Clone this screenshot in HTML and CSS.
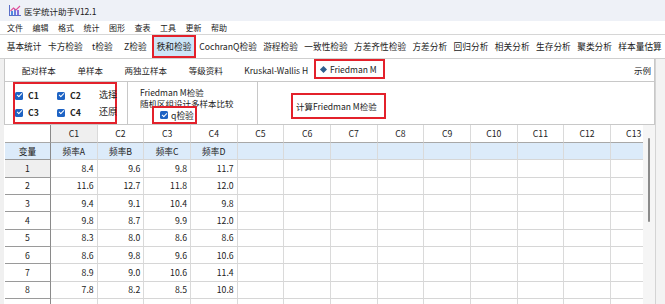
FILE: index.html
```html
<!DOCTYPE html>
<html lang="zh">
<head>
<meta charset="UTF-8">
<meta name="viewport" content="width=device-width, initial-scale=1.0">
<title>医学统计助手V12.1</title>
<link rel="stylesheet" href="styles.css">
</head>
<body>

<div class="app">
  <!-- Title bar -->
  <div class="titlebar">
    <svg class="logo" width="12" height="11" viewBox="0 0 12 11">
      <rect x="0" y="0" width="1" height="11" fill="#5a6fc8"/>
      <rect x="0" y="10" width="12" height="1" fill="#5a6fc8"/>
      <rect x="2" y="6" width="2" height="4" fill="#4f8be0"/>
      <rect x="5" y="4" width="2" height="6" fill="#6a7fe0"/>
      <rect x="8" y="5" width="2" height="5" fill="#8a6fd8"/>
      <polyline points="1.5,6 4.5,3 7,5 11,1" fill="none" stroke="#e0509a" stroke-width="1.1"/>
    </svg>
    <span class="title">医学统计助手V12.1</span>
  </div>

  <!-- Menu -->
  <div class="menubar">
    <span>文件</span><span>编辑</span><span>格式</span><span>统计</span><span>图形</span>
    <span>查表</span><span>工具</span><span>更新</span><span>帮助</span>
  </div>

  <!-- Main toolbar tabs -->
  <div class="toolbar">
    <span class="tool">基本统计</span>
    <span class="tool">卡方检验</span>
    <span class="tool">t检验</span>
    <span class="tool">Z检验</span>
    <span class="tool active">秩和检验</span>
    <span class="tool">CochranQ检验</span>
    <span class="tool">游程检验</span>
    <span class="tool">一致性检验</span>
    <span class="tool">方差齐性检验</span>
    <span class="tool">方差分析</span>
    <span class="tool">回归分析</span>
    <span class="tool">相关分析</span>
    <span class="tool">生存分析</span>
    <span class="tool">聚类分析</span>
    <span class="tool">样本量估算</span>
  </div>

  <div class="workspace">
    <div class="edge-left"></div>

    <div class="center">
      <!-- Test panel -->
      <div class="panel">
        <div class="subtabs">
          <span class="subtab">配对样本</span>
          <span class="subtab">单样本</span>
          <span class="subtab">两独立样本</span>
          <span class="subtab">等级资料</span>
          <span class="subtab">Kruskal-Wallis H</span>
          <span class="subtab selected"><i class="diamond"></i>Friedman M</span>
          <span class="spacer"></span>
          <span class="subtab example">示例</span>
        </div>

        <div class="options">
          <div class="group cols">
            <div class="col-grid">
              <label class="check"><i class="box"></i>C1</label>
              <label class="check"><i class="box"></i>C2</label>
              <span class="link">选择</span>
              <label class="check"><i class="box"></i>C3</label>
              <label class="check"><i class="box"></i>C4</label>
              <span class="link">还原</span>
            </div>
          </div>

          <div class="group desc">
            <div class="line">Friedman M检验</div>
            <div class="line">随机区组设计多样本比较</div>
            <label class="qcheck"><i class="box"></i>q检验</label>
          </div>

          <div class="group action">
            <button type="button" class="run">计算Friedman M检验</button>
          </div>
        </div>
      </div>

      <!-- Data sheet -->
      <div class="sheet">
        <div class="grid" id="grid"></div>
        <div class="vscroll"><div class="thumb"></div></div>
      </div>
    </div>

    <div class="edge-right"></div>
  </div>
</div>

<script>
  // Build the spreadsheet
  var names = ["频率A", "频率B", "频率C", "频率D"];
  var data = [
    [8.4, 9.6, 9.8, 11.7],
    [11.6, 12.7, 11.8, 12.0],
    [9.4, 9.1, 10.4, 9.8],
    [9.8, 8.7, 9.9, 12.0],
    [8.3, 8.0, 8.6, 8.6],
    [8.6, 9.8, 9.6, 10.6],
    [8.9, 9.0, 10.6, 11.4],
    [7.8, 8.2, 8.5, 10.8]
  ];
  var cols = 13;
  var grid = document.getElementById("grid");

  function cell(text, cls) {
    var d = document.createElement("div");
    d.className = "cell " + (cls || "");
    d.textContent = text;
    grid.appendChild(d);
  }

  // Column header row
  cell("", "corner");
  for (var c = 1; c <= cols; c++) {
    cell("C" + c, "colhead" + (c == 1 ? " current" : ""));
  }

  // Variable names row
  cell("变量", "rowhead varhead");
  for (var c = 0; c < cols; c++) {
    cell(names[c] || "", "varname");
  }

  // Data rows
  for (var r = 0; r < 9; r++) {
    cell(r < 8 ? r + 1 : "", "rowhead" + (r == 0 ? " current" : ""));
    for (var c = 0; c < cols; c++) {
      var v = r < 8 ? data[r][c] : undefined;
      cell(v === undefined ? "" : v.toFixed(1), "num");
    }
  }
</script>

</body>
</html>
```

FILE: styles.css
```css
* {
  box-sizing: border-box;
}
body {
  margin: 0;
  font-family: "Noto Sans CJK SC", "Noto Sans", sans-serif;
  color: #222;
  background: #fff;
}
.app {
  width: 665px;
  height: 304px;
  overflow: hidden;
  display: flex;
  flex-direction: column;
}

/* title bar */
.titlebar {
  height: 21px;
  background: #eef1f7;
  display: flex;
  align-items: center;
  padding-left: 9px;
}
.logo {
  margin-right: 3px;
}
.title {
  font-size: 8.5px;
  color: #1a1a1a;
}

/* menu */
.menubar {
  height: 14px;
  display: flex;
  align-items: center;
  padding-left: 7px;
  font-size: 8px;
  border-bottom: 1px solid #d6d6d6;
}
.menubar span {
  margin-right: 9.5px;
}

/* toolbar tabs */
.toolbar {
  height: 24px;
  display: flex;
  align-items: stretch;
  padding-left: 3.5px;
  font-size: 8.7px;
  white-space: nowrap;
  border-bottom: 1px solid #cfcfcf;
}
.tool {
  display: flex;
  align-items: center;
  justify-content: center;
  padding: 0 3.5px;
  min-width: 33px;
}
.tool.active {
  background: #cde5f7;
  border: 2px solid #e3212b;
  padding: 0 3px;
}

/* workspace */
.workspace {
  flex: 1;
  display: flex;
  min-height: 0;
}
.edge-left {
  width: 4px;
  background: #f0f0f0;
}
.center {
  width: 651px;
  display: flex;
  flex-direction: column;
}
.edge-right {
  flex: 1;
  background: #f3f3f3;
  border-left: 1px solid #d4d4d4;
}

/* panel */
.panel {
  height: 66px;
  border-left: 1px solid #c8c8c8;
  border-right: 1px solid #c8c8c8;
  border-bottom: 1px solid #c8c8c8;
}
.subtabs {
  height: 23px;
  display: flex;
  align-items: stretch;
  padding-left: 6px;
  font-size: 8.5px;
  white-space: nowrap;
  border-bottom: 1px solid #c8c8c8;
}
.subtab {
  display: flex;
  align-items: center;
  padding: 0 10.8px;
}
.subtab.selected {
  border: 2px solid #e3212b;
  margin: 0 0 2px -5px;
  padding: 0 6px 0 5px;
}
.diamond {
  width: 5px;
  height: 5px;
  background: #2f5f8f;
  transform: rotate(45deg);
  margin-right: 4px;
}
.spacer {
  flex: 1;
}
.subtab.example {
  padding: 0 3px 0 0;
}

.options {
  height: 42px;
  display: flex;
}
.group {
  height: 100%;
}
.cols {
  width: 104px;
  margin-left: 8px;
  margin-right: 10px;
  border: 2px solid #e3212b;
}
.col-grid {
  display: grid;
  grid-template-columns: 42px 42px auto;
  grid-auto-rows: 17px;
  padding-top: 3px;
  font-size: 8.7px;
  white-space: nowrap;
}
.check {
  display: flex;
  align-items: center;
  font-weight: bold;
}
.box {
  display: inline-block;
  width: 8px;
  height: 8px;
  margin-right: 5px;
  border-radius: 1.5px;
  background: #1e63c4;
  position: relative;
}
.box::after {
  content: "";
  position: absolute;
  left: 2.5px;
  top: 0.8px;
  width: 2px;
  height: 4px;
  border: solid #fff;
  border-width: 0 1px 1px 0;
  transform: rotate(45deg);
}
.link {
  display: flex;
  align-items: center;
  font-size: 9px;
  margin-top: -2px;
}

.desc {
  width: 130px;
  border-left: 1px solid #c8c8c8;
  padding: 5px 0 0 12px;
  font-size: 8.5px;
  line-height: 11px;
  position: relative;
  white-space: nowrap;
}
.qcheck {
  position: absolute;
  left: 24px;
  top: 24px;
  width: 45px;
  height: 18px;
  background: #fff;
  border: 2px solid #e3212b;
  display: flex;
  align-items: center;
  padding-left: 6px;
  font-size: 8.7px;
}
.qcheck .box {
  margin-right: 3px;
}

.action {
  border-left: 1px solid #c8c8c8;
  padding: 9px 0 0 33px;
}
.run {
  width: 95px;
  height: 26px;
  border: 2px solid #e3212b;
  background: #fff;
  font-family: inherit;
  font-size: 8.5px;
  color: #222;
  padding: 0 0 0 3px;
  text-align: left;
}

/* data sheet */
.sheet {
  flex: 1;
  display: flex;
  min-height: 0;
  padding-left: 1px;
}
.grid {
  width: 638px;
  overflow: hidden;
  display: grid;
  grid-template-columns: 46px repeat(13, 46.67px);
  grid-template-rows: 18px;
  grid-auto-rows: 17.33px;
  font-size: 8.7px;
  align-content: start;
}
.cell {
  border-right: 1px solid #dadada;
  border-bottom: 1px solid #d6d6d6;
  display: flex;
  align-items: center;
  padding: 0 3px;
  white-space: nowrap;
  overflow: hidden;
}
.corner {
  border-right: 1px solid #8a8a8a;
  border-bottom: 1px solid #a8a8a8;
}
.colhead {
  justify-content: center;
  border-bottom: 1px solid #a8a8a8;
}
.colhead.current {
  background: #efefef;
}
.rowhead {
  justify-content: center;
  border-right: 1px solid #8a8a8a;
  border-bottom: 1px solid #9a9a9a;
}
.rowhead.current {
  background: #efefef;
}
.varhead, .varname {
  background: #dcebfa;
  justify-content: center;
}
.num {
  justify-content: flex-end;
}

.vscroll {
  width: 12px;
  background: #f5f5f5;
  position: relative;
}
.thumb {
  position: absolute;
  left: 5px;
  top: 13px;
  width: 2px;
  height: 84px;
  background: #8b8b8b;
  border-radius: 1px;
}
```
